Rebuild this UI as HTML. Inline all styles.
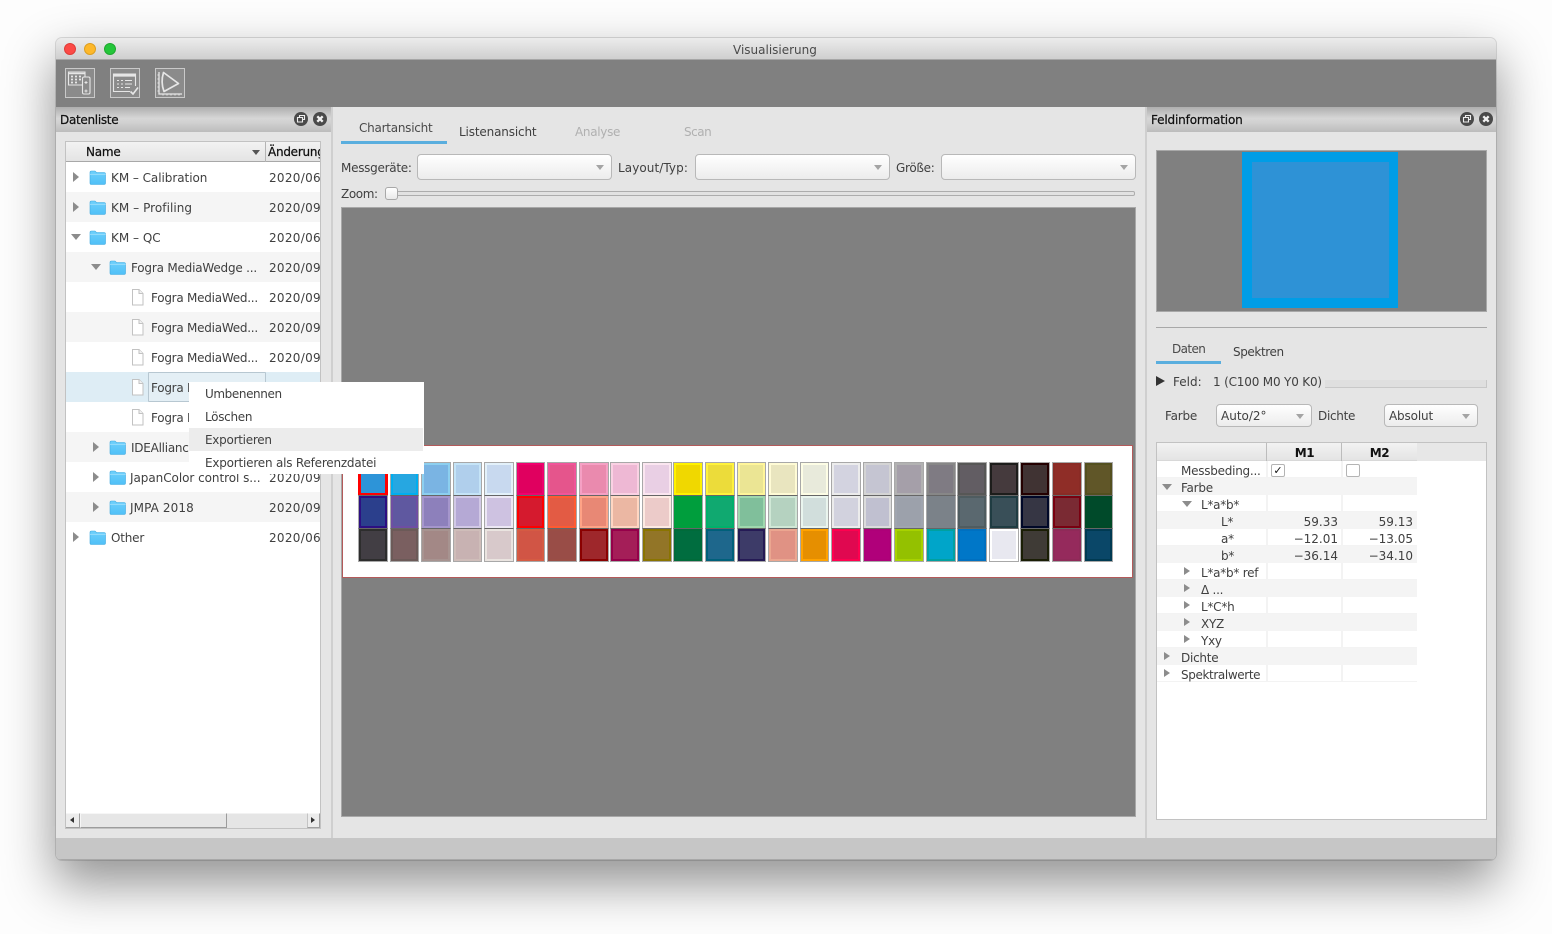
<!DOCTYPE html>
<html lang="de"><head><meta charset="utf-8"><title>Visualisierung</title>
<style>
html,body{margin:0;padding:0;width:1552px;height:934px;overflow:hidden;background:#fdfdfd}
*{box-sizing:border-box}
body{font:12px/14px "DejaVu Sans","Liberation Sans",sans-serif;color:#404040;position:relative}
.a,.t,.r,.s{position:absolute}
.t{white-space:nowrap;height:14px;letter-spacing:-.25px;transform:translateY(1px)}
.d{letter-spacing:.3px}
.k{color:#111;-webkit-text-stroke:.25px #111}
.g{color:#b0b0b0}
#win{left:56px;top:38px;width:1440px;height:822px;border-radius:6px;box-shadow:0 22px 50px 2px rgba(0,0,0,.42),0 0 0 1px rgba(0,0,0,.12)}
.hd{height:25px;top:107px;background:linear-gradient(#aeaeae,#d6d6d6 45%,#d2d2d2 60%,#bcbcbc)}
.combo{height:26px;top:154px;border:1px solid #b8b8b8;border-radius:4px;background:linear-gradient(#fff,#ececec)}
.combo:after{content:"";position:absolute;right:7px;top:10px;border:4px solid transparent;border-top:5px solid #a4a4a4;border-bottom:0}
.sm:after{top:9px}
.r{left:1px;width:254px;height:30px}
.alt{background:#f5f5f5}
.tri{position:absolute;width:0;height:0;border:5px solid transparent;border-left:6px solid #8c8c8c;border-right:0;margin-top:-1px}
#tb .tri{border-width:4.5px 0 4.5px 6px;margin-top:0}
.dn{position:absolute;width:0;height:0;border:5px solid transparent;border-top:6px solid #8c8c8c;border-bottom:0}
#sw{position:absolute;left:358px;top:462px;display:grid;grid-template-columns:repeat(24,29.7px);column-gap:1.87px;grid-auto-rows:33px}
#sw b{display:block;position:relative;border:1px solid #a8a8a8;border-width:1px 1px 0}
#sw b:nth-child(n+25){border-top-color:#666}
#sw b:nth-child(n+49){border-bottom-width:1px;height:34px}
#sw i{position:absolute;left:2px;right:2px;top:2px;bottom:2px}
.tr{position:absolute;left:1px;width:260px;height:17px}
.w{background:#fff;border-bottom:1px solid #f3f3f3}
.w:before,.w:after{content:"";position:absolute;top:0;bottom:0;width:2px;background:#f3f3f3}
.w:before{left:109px}.w:after{left:184px}
.y{background:#f4f4f4}
.n{position:absolute;right:0;width:70px;text-align:right;white-space:nowrap;transform:translateY(1px)}
</style></head><body>
<svg width="0" height="0" style="position:absolute"><defs>
<linearGradient id="fg" x1="0" y1="0" x2="0" y2="1"><stop offset="0" stop-color="#6fd0fb"/><stop offset="1" stop-color="#4fc0f7"/></linearGradient>
<symbol id="fo" viewBox="0 0 17 15"><path d="M1 2.500Q1 1 2.500 1H6L7.500 2.500H15Q16.500 2.500 16.500 4V13Q16.500 14.500 15 14.500H2.500Q1 14.500 1 13Z" fill="url(#fg)" stroke="#3fa9e0" stroke-width=".6"/><path d="M1 4.300H16.500" stroke="#a5e2fd" stroke-width=".8"/></symbol>
<symbol id="fi" viewBox="0 0 13 17"><path d="M1.500 .5H8L12 4.500V16H1.500Z" fill="#fff" stroke="#c2c2c2"/><path d="M8 .5V4.500H12" fill="#f2f2f2" stroke="#c2c2c2"/></symbol>
<symbol id="re" viewBox="0 0 16 16"><circle cx="8" cy="8" r="7" fill="#4a4a4a"/><path d="M6.500 6V4.500H11.500V8.500H10M4.500 6.500H9.500V11H4.500Z" fill="none" stroke="#eee" stroke-width="1.100"/></symbol>
<symbol id="cl" viewBox="0 0 16 16"><circle cx="8" cy="8" r="7" fill="#4a4a4a"/><path d="M5.300 5.300L10.700 10.700M10.700 5.300L5.300 10.700" stroke="#f2f2f2" stroke-width="2.300"/></symbol>
</defs></svg>

<div class="a" id="win" style="background:#e5e5e5;overflow:hidden">
<div class="a" style="left:0;top:0;width:1440px;height:22px;background:linear-gradient(#ececec,#cfcfcf);border-bottom:1px solid #a6a6a6"></div>
<div class="a" style="left:0;top:22px;width:1440px;height:47px;background:#808080"></div>
<div class="a" style="left:0;top:800px;width:1440px;height:22px;background:#c6c6c6;border-bottom:1px solid #a8a8a8"></div>
</div>

<div class="a" style="left:64px;top:43px;width:12px;height:12px;border-radius:50%;background:#fc4a46;border:.5px solid #df3d38"></div>
<div class="a" style="left:84px;top:43px;width:12px;height:12px;border-radius:50%;background:#fdb82a;border:.5px solid #dd9f20"></div>
<div class="a" style="left:104px;top:43px;width:12px;height:12px;border-radius:50%;background:#24c63a;border:.5px solid #1fa82f"></div>
<div class="t" style="left:733px;top:42px;color:#4a4a4a;letter-spacing:0">Visualisierung</div>

<svg class="a" style="left:65px;top:68px" width="30" height="30" viewBox="0 0 30 30" fill="none" stroke="#e6e6e6"><rect x=".5" y=".5" width="29" height="29" stroke="#c9c9c9" fill="#8b8b8b"/><path d="M17 17H3.500V4H20V9" stroke-width="1.100"/><path d="M3.500 5.500H20" stroke-width="1.600"/><path d="M6 8.500h2M10 8.500h2M14 8.500h2M6 11.500h2M10 11.500h2M14 11.500h2M6 14.500h2M10 14.500h2" stroke-width="1.800"/><rect x="17.500" y="9" width="7.500" height="17" rx="1.500" fill="#8b8b8b" stroke-width="1.100"/><path d="M21 13v3M19.500 14.500h3M19.500 23h3M21 21.500v3" stroke-width="1"/></svg>
<svg class="a" style="left:110px;top:68px" width="30" height="30" viewBox="0 0 30 30" fill="none" stroke="#e6e6e6"><rect x=".5" y=".5" width="29" height="29" stroke="#c9c9c9" fill="#8b8b8b"/><path d="M20 23.500H3.500V6H25.500V18" stroke-width="1.100"/><path d="M3.500 7.500H25.500" stroke-width="2.200"/><path d="M7 12.500h2M7 16h2M7 19.500h2M11 12.500h2M11 16h2M11 19.500h2M15 12.500h7M15 16h7M15 19.500h5" stroke-width="1.100"/><path d="M20.500 23.500L23 26L28 19.500" stroke-width="1.600"/></svg>
<svg class="a" style="left:155px;top:68px" width="30" height="30" viewBox="0 0 30 30" fill="none" stroke="#e6e6e6"><rect x=".5" y=".5" width="29" height="29" stroke="#c9c9c9" fill="#8b8b8b"/><path d="M4 4V26H27" stroke-width="1.300"/><path d="M2.500 7H4M2.500 11H4M2.500 15H4M2.500 19H4M2.500 23H4M8 26v1.500M12 26v1.500M16 26v1.500M20 26v1.500M24 26v1.500" stroke-width="1"/><path d="M8.500 4.500L23.500 15.500L9 23.500C6.500 17 6.500 11 8.500 4.500Z" stroke-width="1.700" stroke-linejoin="round"/></svg>

<div class="a" style="left:331px;top:107px;width:2px;height:731px;background:#cfcfcf"></div>
<div class="a" style="left:1145px;top:107px;width:2px;height:731px;background:#cfcfcf"></div>

<div class="a hd" style="left:56px;width:275px"></div>
<div class="t k" style="left:60px;top:112px;letter-spacing:-.3px">Datenliste</div>
<svg class="a" style="left:293px;top:111px" width="16" height="16"><use href="#re"/></svg>
<svg class="a" style="left:312px;top:111px" width="16" height="16"><use href="#cl"/></svg>

<div class="a" id="tree" style="left:65px;top:141px;width:256px;height:688px;background:#fff;border:1px solid #c2c2c2;overflow:hidden">
<div class="a" style="left:0;top:0;width:256px;height:20px;background:linear-gradient(#f2f2f2,#e4e4e4);border-bottom:1px solid #a8a8a8"></div>
<div class="a" style="left:199px;top:0;width:1px;height:20px;background:#b4b4b4"></div>
<div class="t k" style="left:20px;top:2px;letter-spacing:-.2px">Name</div>
<div class="a" style="left:186px;top:8px;width:0;height:0;border:4px solid transparent;border-top:5px solid #555;border-bottom:0"></div>
<div class="t k" style="left:202px;top:2px">Änderung</div>

<div class="r" style="top:20px;left:0"><i class="tri" style="left:7px;top:11px"></i><svg class="a" style="left:23px;top:8px" width="17" height="15"><use href="#fo"/></svg><span class="t" style="left:45px;top:8px;letter-spacing:-.05px">KM – Calibration</span><span class="t d" style="left:203px;top:8px">2020/06</span></div>
<div class="r alt" style="top:50px;left:0"><i class="tri" style="left:7px;top:11px"></i><svg class="a" style="left:23px;top:8px" width="17" height="15"><use href="#fo"/></svg><span class="t" style="left:45px;top:8px;letter-spacing:.05px">KM – Profiling</span><span class="t d" style="left:203px;top:8px">2020/09</span></div>
<div class="r" style="top:80px;left:0"><i class="dn" style="left:5px;top:12px"></i><svg class="a" style="left:23px;top:8px" width="17" height="15"><use href="#fo"/></svg><span class="t" style="left:45px;top:8px;letter-spacing:0">KM – QC</span><span class="t d" style="left:203px;top:8px">2020/06</span></div>
<div class="r alt" style="top:110px;left:0"><i class="dn" style="left:25px;top:12px"></i><svg class="a" style="left:43px;top:8px" width="17" height="15"><use href="#fo"/></svg><span class="t" style="left:65px;top:8px;letter-spacing:-.2px">Fogra MediaWedge ...</span><span class="t d" style="left:203px;top:8px">2020/09</span></div>
<div class="r" style="top:140px;left:0"><svg class="a" style="left:65px;top:7px" width="13" height="17"><use href="#fi"/></svg><span class="t" style="left:85px;top:8px">Fogra MediaWed...</span><span class="t d" style="left:203px;top:8px">2020/09</span></div>
<div class="r alt" style="top:170px;left:0"><svg class="a" style="left:65px;top:7px" width="13" height="17"><use href="#fi"/></svg><span class="t" style="left:85px;top:8px">Fogra MediaWed...</span><span class="t d" style="left:203px;top:8px">2020/09</span></div>
<div class="r" style="top:200px;left:0"><svg class="a" style="left:65px;top:7px" width="13" height="17"><use href="#fi"/></svg><span class="t" style="left:85px;top:8px">Fogra MediaWed...</span><span class="t d" style="left:203px;top:8px">2020/09</span></div>
<div class="r" style="top:230px;left:0;background:#deedf5"><svg class="a" style="left:65px;top:7px" width="13" height="17"><use href="#fi"/></svg><span class="a" style="left:82px;top:0;width:118px;height:30px;border:1px solid #b7c7d1;border-radius:1px;background:#e4eff5"></span><span class="t" style="left:85px;top:8px">Fogra MediaWed...</span></div>
<div class="r" style="top:260px;left:0"><svg class="a" style="left:65px;top:7px" width="13" height="17"><use href="#fi"/></svg><span class="t" style="left:85px;top:8px">Fogra MediaWed...</span></div>
<div class="r alt" style="top:290px;left:0"><i class="tri" style="left:27px;top:11px"></i><svg class="a" style="left:43px;top:8px" width="17" height="15"><use href="#fo"/></svg><span class="t" style="left:65px;top:8px">IDEAlliance 2013</span><span class="t d" style="left:203px;top:8px">2020/09</span></div>
<div class="r" style="top:320px;left:0"><i class="tri" style="left:27px;top:11px"></i><svg class="a" style="left:43px;top:8px" width="17" height="15"><use href="#fo"/></svg><span class="t" style="left:64px;top:8px;letter-spacing:-.05px">JapanColor control s...</span><span class="t d" style="left:203px;top:8px">2020/09</span></div>
<div class="r alt" style="top:350px;left:0"><i class="tri" style="left:27px;top:11px"></i><svg class="a" style="left:43px;top:8px" width="17" height="15"><use href="#fo"/></svg><span class="t" style="left:64px;top:8px;letter-spacing:.1px">JMPA 2018</span><span class="t d" style="left:203px;top:8px">2020/09</span></div>
<div class="r" style="top:380px;left:0"><i class="tri" style="left:7px;top:11px"></i><svg class="a" style="left:23px;top:8px" width="17" height="15"><use href="#fo"/></svg><span class="t" style="left:45px;top:8px;letter-spacing:-.2px">Other</span><span class="t d" style="left:203px;top:8px">2020/06</span></div>

<div class="a" style="left:0;top:671px;width:254px;height:15px;background:#e5e5e5;border-top:1px solid #f2f2f2"></div>
<div class="a" style="left:0;top:671px;width:14px;height:15px;background:#ececec;border:1px solid #a0a0a0;border-width:1px 1px 1px 0;border-top-color:#f6f6f6"></div>
<div class="a" style="left:4px;top:675px;border:3.500px solid transparent;border-right:4px solid #333;border-left:0"></div>
<div class="a" style="left:14px;top:671px;width:147px;height:15px;background:#e6e6e6;border:1px solid #9c9c9c;border-top-color:#f6f6f6;border-left-color:#f6f6f6"></div>
<div class="a" style="left:241px;top:671px;width:13px;height:15px;background:#ececec;border:1px solid #a0a0a0;border-top-color:#f6f6f6;border-left-color:#c4c4c4"></div>
<div class="a" style="left:245px;top:675px;border:3.500px solid transparent;border-left:4px solid #333;border-right:0"></div>
</div>

<div class="t" style="left:359px;top:120px;color:#4a4a4a">Chartansicht</div>
<div class="a" style="left:341px;top:141px;width:106px;height:3px;background:#5aaede"></div>
<div class="t" style="left:459px;top:124px;letter-spacing:-.15px">Listenansicht</div>
<div class="t g" style="left:575px;top:124px;letter-spacing:-.3px">Analyse</div>
<div class="t g" style="left:684px;top:124px;letter-spacing:-.5px">Scan</div>
<div class="t" style="left:341px;top:160px;letter-spacing:-.27px">Messgeräte:</div>
<div class="a combo" style="left:417px;width:195px"></div>
<div class="t" style="left:618px;top:160px;letter-spacing:.08px">Layout/Typ:</div>
<div class="a combo" style="left:695px;width:195px"></div>
<div class="t" style="left:896px;top:160px;letter-spacing:-.3px">Größe:</div>
<div class="a combo" style="left:941px;width:195px"></div>
<div class="t" style="left:341px;top:186px;letter-spacing:-.4px">Zoom:</div>
<div class="a" style="left:392px;top:191px;width:743px;height:5px;border:1px solid #adadad;border-radius:2px;background:#e2e2e2"></div>
<div class="a" style="left:385px;top:187px;width:13px;height:13px;border:1px solid #a8a8a8;border-radius:3px;background:linear-gradient(#fff,#e9e9e9)"></div>

<div class="a" style="left:341px;top:207px;width:795px;height:610px;background:#808080;border:1px solid #a8a8a8"></div>
<div class="a" style="left:342px;top:445px;width:791px;height:133px;background:#fff;border:1px solid #b45a5a"></div>
<div id="sw">
<b style="background:#ff0000;border-color:#ff0000"><i style="background:#2d94d8"></i></b><b style="background:#00aeef"><i style="background:#26a7e1"></i></b><b style="background:#8ccfef"><i style="background:#7ab4e3"></i></b><b style="background:#c5e4f7"><i style="background:#b0cfec"></i></b><b style="background:#e3f1fa"><i style="background:#c8d9ef"></i></b><b style="background:#f0006e"><i style="background:#e0005f"></i></b><b style="background:#f0559a"><i style="background:#e5558c"></i></b><b style="background:#f5a0c4"><i style="background:#ea8aae"></i></b><b style="background:#fad1e3"><i style="background:#eeb8d4"></i></b><b style="background:#fbe6f0"><i style="background:#e9cfe4"></i></b><b style="background:#fff200"><i style="background:#f0d800"></i></b><b style="background:#fff23c"><i style="background:#ecdc3a"></i></b><b style="background:#fff59a"><i style="background:#ebe594"></i></b><b style="background:#fffbd5"><i style="background:#e9e5bf"></i></b><b style="background:#fdfde5"><i style="background:#e8eadb"></i></b><b style="background:#ececec"><i style="background:#d3d3e0"></i></b><b style="background:#d4d4d4"><i style="background:#c5c5d2"></i></b><b style="background:#b2b2b2"><i style="background:#a59fa9"></i></b><b style="background:#878787"><i style="background:#7f7b83"></i></b><b style="background:#575756"><i style="background:#625d63"></i></b><b style="background:#1d1d1b"><i style="background:#453a3d"></i></b><b style="background:#240000"><i style="background:#403333"></i></b><b style="background:#8a2b25"><i style="background:#8f2d27"></i></b><b style="background:#54501f"><i style="background:#605628"></i></b>
<b style="background:#2d0f82"><i style="background:#2b3f8c"></i></b><b style="background:#6f4ea3"><i style="background:#5f58a0"></i></b><b style="background:#a596cc"><i style="background:#8d80bb"></i></b><b style="background:#d2c9e6"><i style="background:#b5a9d5"></i></b><b style="background:#ece7f4"><i style="background:#cec2e1"></i></b><b style="background:#ff0000"><i style="background:#d51a2e"></i></b><b style="background:#ff5a31"><i style="background:#e35b44"></i></b><b style="background:#ffa386"><i style="background:#e88875"></i></b><b style="background:#ffd6c2"><i style="background:#ebb7a3"></i></b><b style="background:#fdeae2"><i style="background:#eccbc9"></i></b><b style="background:#009e3d"><i style="background:#009e3d"></i></b><b style="background:#00b06b"><i style="background:#10a970"></i></b><b style="background:#9fd8ae"><i style="background:#80bf9b"></i></b><b style="background:#d0e8d6"><i style="background:#b5d2c0"></i></b><b style="background:#eaf5ee"><i style="background:#d1dedc"></i></b><b style="background:#ececec"><i style="background:#d2d2de"></i></b><b style="background:#dcdcdc"><i style="background:#c0c0d0"></i></b><b style="background:#a0a5af"><i style="background:#9ca1ab"></i></b><b style="background:#7b8289"><i style="background:#7b8289"></i></b><b style="background:#4f5c60"><i style="background:#5a686f"></i></b><b style="background:#1f3c42"><i style="background:#394f58"></i></b><b style="background:#000828"><i style="background:#363644"></i></b><b style="background:#7a0010"><i style="background:#7a2a33"></i></b><b style="background:#004a26"><i style="background:#004a2a"></i></b>
<b style="background:#2d2d2d"><i style="background:#423e44"></i></b><b style="background:#6c5a58"><i style="background:#7a5f60"></i></b><b style="background:#a79390"><i style="background:#a38886"></i></b><b style="background:#cfbdb9"><i style="background:#c8b2b2"></i></b><b style="background:#eae4e0"><i style="background:#d8c9cb"></i></b><b style="background:#d55b43"><i style="background:#d15545"></i></b><b style="background:#9a4e45"><i style="background:#994d47"></i></b><b style="background:#8a0000"><i style="background:#9e272b"></i></b><b style="background:#95004a"><i style="background:#a41e58"></i></b><b style="background:#8a7400"><i style="background:#927527"></i></b><b style="background:#006b3a"><i style="background:#006d3f"></i></b><b style="background:#00607a"><i style="background:#1e678c"></i></b><b style="background:#251a55"><i style="background:#3d3b68"></i></b><b style="background:#eba690"><i style="background:#e09284"></i></b><b style="background:#ffa200"><i style="background:#e68f00"></i></b><b style="background:#ff004f"><i style="background:#e00850"></i></b><b style="background:#ae0078"><i style="background:#b0007a"></i></b><b style="background:#a8d200"><i style="background:#94c100"></i></b><b style="background:#00a0a0"><i style="background:#00a5c9"></i></b><b style="background:#0070c0"><i style="background:#0077c8"></i></b><b style="background:#ffffff"><i style="background:#e8e8f0"></i></b><b style="background:#1a1e05"><i style="background:#3f3b36"></i></b><b style="background:#8f2a58"><i style="background:#952a5c"></i></b><b style="background:#003a52"><i style="background:#0a4768"></i></b>
</div>

<div class="a" style="left:189px;top:382px;width:235px;height:92px;background:#fff"></div>
<div class="a" style="left:189px;top:428px;width:234px;height:23px;background:#ececec"></div>
<div class="t" style="left:205px;top:386px;letter-spacing:-.4px">Umbenennen</div>
<div class="t" style="left:205px;top:409px;letter-spacing:-.3px">Löschen</div>
<div class="t" style="left:205px;top:432px;letter-spacing:-.27px">Exportieren</div>
<div class="t" style="left:205px;top:455px;letter-spacing:-.21px">Exportieren als Referenzdatei</div>

<div class="a hd" style="left:1147px;width:349px"></div>
<div class="t k" style="left:1151px;top:112px;letter-spacing:-.15px">Feldinformation</div>
<svg class="a" style="left:1459px;top:111px" width="16" height="16"><use href="#re"/></svg>
<svg class="a" style="left:1478px;top:111px" width="16" height="16"><use href="#cl"/></svg>
<div class="a" style="left:1156px;top:150px;width:331px;height:162px;background:#808080;border:1px solid #a8a8a8"></div>
<div class="a" style="left:1242px;top:152px;width:156px;height:156px;background:#009de6"></div>
<div class="a" style="left:1252px;top:162px;width:137px;height:136px;background:#2e92d6"></div>
<div class="a" style="left:1156px;top:327px;width:331px;height:1px;background:#a8a8a8"></div>
<div class="t" style="left:1172px;top:341px;color:#4a4a4a;letter-spacing:-.6px">Daten</div>
<div class="a" style="left:1156px;top:361px;width:65px;height:3px;background:#5aaede"></div>
<div class="t" style="left:1233px;top:344px;letter-spacing:-.4px">Spektren</div>
<div class="a" style="left:1156px;top:376px;border:5px solid transparent;border-left:9px solid #333;border-right:0"></div>
<div class="t" style="left:1173px;top:374px;letter-spacing:0">Feld:</div>
<div class="t" style="left:1213px;top:374px;letter-spacing:-.18px">1 (C100 M0 Y0 K0)</div>
<div class="a" style="left:1325px;top:380px;width:162px;height:8px;background:#dfdfdf;border-bottom:1px solid #c8c8c8;border-right:1px solid #c8c8c8"></div>
<div class="t" style="left:1165px;top:408px;letter-spacing:-.2px">Farbe</div>
<div class="a combo sm" style="left:1216px;top:404px;width:96px;height:23px"><span class="t" style="left:4px;top:3px;letter-spacing:0">Auto/2°</span></div>
<div class="t" style="left:1318px;top:408px;letter-spacing:-.3px">Dichte</div>
<div class="a combo sm" style="left:1384px;top:404px;width:94px;height:23px"><span class="t" style="left:4px;top:3px;letter-spacing:-.15px">Absolut</span></div>

<div class="a" id="tb" style="left:1156px;top:442px;width:331px;height:378px;background:#fff;border:1px solid #c2c2c2">
<div class="a" style="left:0;top:0;width:329px;height:18px;background:#e7e7e7"></div>
<div class="a" style="left:0;top:0;width:260px;height:18px;background:linear-gradient(#f2f2f2,#e4e4e4);border-bottom:1px solid #d8d8d8"></div>
<div class="a" style="left:109px;top:0;width:1px;height:18px;background:#bcbcbc"></div>
<div class="a" style="left:184px;top:0;width:1px;height:18px;background:#bcbcbc"></div>
<div class="t k" style="left:110px;top:2px;width:75px;text-align:center;font-weight:bold;-webkit-text-stroke:0;letter-spacing:-.4px">M1</div>
<div class="t k" style="left:185px;top:2px;width:75px;text-align:center;font-weight:bold;-webkit-text-stroke:0;letter-spacing:-.4px">M2</div>

<div class="tr w" style="top:18px;left:0"><span class="t" style="left:24px;top:2px">Messbeding...</span><span class="a" style="left:114px;top:3px;width:14px;height:13px;background:#fff;border:1px solid #b4b4b4;border-radius:2px;color:#111;font-size:11px;font-weight:bold;line-height:11px;text-align:center">✓</span><span class="a" style="left:189px;top:3px;width:14px;height:13px;background:#fff;border:1px solid #b4b4b4;border-radius:2px"></span></div>
<div class="tr y" style="top:35px;left:0"><i class="dn" style="left:5px;top:6px"></i><span class="t" style="left:24px;top:2px">Farbe</span></div>
<div class="tr w" style="top:52px;left:0"><i class="dn" style="left:25px;top:6px"></i><span class="t" style="left:44px;top:2px">L*a*b*</span></div>
<div class="tr y" style="top:69px;left:0"><span class="t" style="left:64px;top:2px">L*</span><span class="n" style="right:79px;top:2px">59.33</span><span class="n" style="right:4px;top:2px">59.13</span></div>
<div class="tr w" style="top:86px;left:0"><span class="t" style="left:64px;top:2px">a*</span><span class="n" style="right:79px;top:2px">−12.01</span><span class="n" style="right:4px;top:2px">−13.05</span></div>
<div class="tr y" style="top:103px;left:0"><span class="t" style="left:64px;top:2px">b*</span><span class="n" style="right:79px;top:2px">−36.14</span><span class="n" style="right:4px;top:2px">−34.10</span></div>
<div class="tr w" style="top:120px;left:0"><i class="tri" style="left:27px;top:4px"></i><span class="t" style="left:44px;top:2px">L*a*b* ref</span></div>
<div class="tr y" style="top:137px;left:0"><i class="tri" style="left:27px;top:4px"></i><span class="t" style="left:44px;top:2px">Δ ...</span></div>
<div class="tr w" style="top:154px;left:0"><i class="tri" style="left:27px;top:4px"></i><span class="t" style="left:44px;top:2px">L*C*h</span></div>
<div class="tr y" style="top:171px;left:0"><i class="tri" style="left:27px;top:4px"></i><span class="t" style="left:44px;top:2px">XYZ</span></div>
<div class="tr w" style="top:188px;left:0"><i class="tri" style="left:27px;top:4px"></i><span class="t" style="left:44px;top:2px">Yxy</span></div>
<div class="tr y" style="top:205px;left:0"><i class="tri" style="left:7px;top:4px"></i><span class="t" style="left:24px;top:2px">Dichte</span></div>
<div class="tr w" style="top:222px;left:0"><i class="tri" style="left:7px;top:4px"></i><span class="t" style="left:24px;top:2px;letter-spacing:-.38px">Spektralwerte</span></div>
</div>
</body></html>
